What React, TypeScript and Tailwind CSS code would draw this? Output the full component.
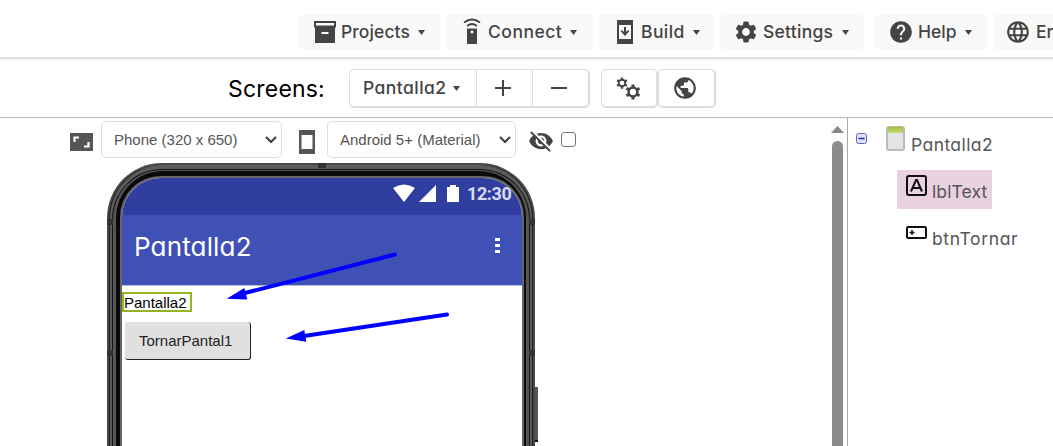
import React from "react";
import { MdSettings, MdHelp, MdLanguage, MdPublic, MdVisibilityOff } from "react-icons/md";

const ui = "font-[Inter,sans-serif] [font-feature-settings:'cv11'] whitespace-nowrap";

function Caret() {
  return (
    <svg width="7" height="5" viewBox="0 0 7 5" fill="#444" className="shrink-0">
      <path d="M0 0h7L3.5 5z" />
    </svg>
  );
}

function ArchiveIcon() {
  return (
    <svg width="22" height="22" viewBox="0 0 22 22" fill="#444">
      <path fillRule="evenodd" d="M0 0h22v6.500H0zM2 2v2.500h18V2z" />
      <path fillRule="evenodd" d="M1 6h20v16H1zM7.500 11v2h7v-2z" />
    </svg>
  );
}

function RemoteIcon() {
  return (
    <svg width="18" height="26" viewBox="0 0 18 26" className="-mt-0.5">
      <path fill="#444" fillRule="evenodd" d="M4 10.500h10V26H4zM9 12.500a1.500 1.500 0 1 0 .01 0z" />
      <path fill="none" stroke="#444" strokeWidth="1.800" d="M1 4.500Q9 -1.500 17 4.500M4 8Q9 4 14 8" />
    </svg>
  );
}

function BuildIcon() {
  return (
    <svg width="16" height="24" viewBox="0 0 16 24" fill="#444">
      <path fillRule="evenodd" d="M0 0h16v24H0zM2 5v14h12V5z" />
      <path d="M7 7h2v5l2-2 1.300 1.300L8 16l-4.300-4.700L5 10l2 2z" />
    </svg>
  );
}

function Gear({ size, className }: { size: number; className: string }) {
  return (
    <svg width={size} height={size} viewBox="0 0 16 16" className={className} fill="none" stroke="#444">
      <circle cx="8" cy="8" r="4.400" strokeWidth="2.500" />
      <path strokeWidth="3" d="M8 .5v3M8 12.500v3M1.500 4.250l2.600 1.500M11.900 10.250l2.600 1.500M1.500 11.750l2.600-1.500M11.900 5.750l2.600-1.500" />
    </svg>
  );
}

function Menu({ icon, label, box, text, caret = true }: { icon: React.ReactNode; label: string; box: string; text: string; caret?: boolean }) {
  return (
    <button className={`flex h-9 shrink-0 items-center rounded-[5px] bg-[#f9f9f9] text-[17.500px] font-medium text-[#444] ${box}`}>
      {icon}
      <span className={`shrink-0 pt-px text-left ${text}`}>{label}</span>
      {caret && <Caret />}
    </button>
  );
}

function Select({ label, box }: { label: string; box: string }) {
  return (
    <div className={`flex h-[37px] shrink-0 items-center justify-between rounded-[5px] border border-[#ddd] bg-white pl-3 pr-[4px] font-['Liberation_Sans',sans-serif] text-[15px] text-[#555] ${box}`}>
      <span className="whitespace-nowrap pt-px">{label}</span>
      <svg width="12" height="8" viewBox="0 0 12 8" fill="none" stroke="#444" strokeWidth="2.200"><path d="M1 1l5 5 5-5" /></svg>
    </div>
  );
}

export default function App() {
  return (
    <div className={`relative flex h-[446px] w-[1053px] flex-col overflow-hidden bg-white ${ui}`}>
      <header className="flex h-[59px] shrink-0 items-start border-b-2 border-[#ddd] pl-[299px] pt-[14px] shadow-[0_1px_3px_#0001]">
        <Menu box="w-[142px] pl-[15px]" icon={<ArchiveIcon />} label="Projects" text="ml-[5px] w-[77px] tracking-[0.1px]" />
        <Menu box="ml-[5px] w-[147px] pl-[17px]" icon={<RemoteIcon />} label="Connect" text="ml-[7px] w-[82px] tracking-[0.5px]" />
        <Menu box="ml-[6px] w-[116px] pl-[18px]" icon={<BuildIcon />} label="Build" text="ml-[8px] w-[52px] tracking-[0.4px]" />
        <Menu box="ml-[5px] w-[144px] pl-[13px]" icon={<MdSettings size={26} />} label="Settings" text="ml-[4px] w-[79px] tracking-[0.25px]" />
        <Menu box="ml-[11px] w-[113px] pl-[13px]" icon={<MdHelp size={26} />} label="Help" text="ml-[4px] w-[47px]" />
        <Menu box="ml-[5px] w-[120px] pl-[12px]" icon={<MdLanguage size={26} />} label="English" text="ml-[5px]" caret={false} />
      </header>

      <section className="flex h-[59px] shrink-0 items-start border-b border-[#bbb] pl-[228px] pt-[10px]">
        <span className="mt-[3px] w-[121px] text-[23px] leading-[34px] tracking-[0.2px] text-black">Screens:</span>
        <div className="flex h-[39px] w-[241px] rounded-[5px] border border-b-2 border-r-2 border-[#ddd]">
          <div className="flex w-[127px] items-center border-r border-[#ddd] pl-[13px] text-[17.500px] font-medium tracking-[0.45px] text-[#444]"><span className="w-[90px] pt-px">Pantalla2</span><Caret /></div>
          <div className="flex w-[56px] items-center justify-center border-r border-[#ddd] pr-[4px]">
            <svg width="16" height="16" stroke="#444" strokeWidth="2"><path d="M0 8h16M8 0v16" /></svg>
          </div>
          <div className="flex w-[54px] items-center justify-center pr-[3px]">
            <svg width="16" height="16" stroke="#444" strokeWidth="2"><path d="M0 8h16" /></svg>
          </div>
        </div>
        <div className="ml-[11px] flex h-[39px] w-[57px] shrink-0 items-start rounded-[5px] border border-b-2 border-r-2 border-[#ddd] pl-[14px] pt-[7px]">
          <Gear size={12} className="shrink-0" />
          <Gear size={16} className="-ml-[3px] mt-[7px] shrink-0" />
        </div>
        <div className="flex h-[39px] w-[58px] items-center rounded-[5px] border border-b-2 border-r-2 border-[#ddd] pl-[13px] text-[#444]"><MdPublic size={26} /></div>
      </section>

      <main className="flex min-h-0 flex-1">
        <section className="flex w-[831px] shrink-0 flex-col">
          <div className="flex h-[45px] shrink-0 items-start pl-[70px] pt-[3px]">
            <svg width="23" height="18" viewBox="0 0 23 18" className="mt-[12px]"><path fill="#555" d="M0 0h23v18H0z" /><path fill="none" stroke="#fff" strokeWidth="2.200" d="M4.500 9V4.500H9M14 13.500h4.500v-4.500" /></svg>
            <Select box="ml-[8px] w-[181px]" label="Phone (320 x 650)" />
            <svg width="16" height="24" viewBox="0 0 16 24" className="ml-[17px] mt-[9px]"><path fill="#555" fillRule="evenodd" d="M0 0h16v24H0zM2.500 5v14h11V5z" /></svg>
            <Select box="ml-[12px] w-[189px]" label="Android 5+ (Material)" />
            <MdVisibilityOff size={26} className="ml-[12px] mt-[7px] text-[#444]" />
            <span className="ml-[7px] mt-[11px] h-[15px] w-[15px] rounded-[3px] border border-[#777]" />
          </div>
          <div className="relative ml-[107px] flex h-[500px] w-[428px] shrink-0 rounded-t-[55px] bg-[#4a4a4a] px-[2px] pt-[2px]">
            <span className="absolute left-[428px] top-[224px] h-[55px] w-[3px] border-b-2 border-[#111] bg-[#555]" />
            <span className="absolute left-0 top-[56px] h-[6px] w-[6px] bg-[#333]" />
            <span className="absolute left-0 top-[187px] h-[6px] w-[6px] bg-[#333]" />
            <span className="absolute right-0 top-[56px] h-[6px] w-[6px] bg-[#333]" />
            <span className="absolute right-0 top-[187px] h-[6px] w-[6px] bg-[#333]" />
            <span className="absolute left-[211px] top-0 h-[5px] w-[8px] bg-[#333]" />
            <div className="flex w-full rounded-t-[53px] bg-[#1c1c1c] px-px">
              <div className="flex w-full rounded-t-[53px] bg-[#5c5c5c] px-[2px] pt-[4px]">
                <div className="flex w-full rounded-t-[50px] bg-[#141414] px-px pt-px">
                  <div className="flex w-full rounded-t-[49px] bg-[#555] px-[3px] pt-px">
                    <div className="flex w-full rounded-t-[47px] bg-[#0a0a0a] pl-[4px] pr-[2px] pt-[5px]">
                      <div className="flex w-full rounded-t-[41px] bg-[#666] px-[2px] pt-[2px]">
                        <div className="flex w-full flex-col overflow-hidden rounded-t-[39px] bg-white">
                          <div className="flex h-[37px] shrink-0 items-center bg-[#303f9f] pl-[271px] text-white">
                            <svg width="66" height="19" viewBox="0 0 66 19" fill="#fff" className="-mt-[6px] shrink-0">
                              <path d="M0 4Q11 -3 22 4L11 18zM43 1v17H26zM54 3v15h12V3h-3V1h-6v2z" />
                            </svg>
                            <span className="-mt-[6px] ml-[8px] font-[Roboto,sans-serif] text-[18px] font-bold tracking-[-0.4px] text-[#d9dcf2]">12:30</span>
                          </div>
                          <div className="flex h-[71px] shrink-0 items-center justify-between border-b border-[#b5bce4] bg-[#3f51b5] pl-3 pr-[22px] text-[26px] tracking-[0.15px] text-white">
                            <span className="-mt-2">Pantalla2</span>
                            <svg width="5" height="16" fill="#fff" className="-mt-2"><path d="M0 0h5v3H0zM0 6h5v3H0zM0 12h5v3H0z" /></svg>
                          </div>
                          <div className="mt-[6px] flex h-5 w-[70px] shrink-0 items-center border-2 border-[#93b51e] pt-px font-['Liberation_Sans',sans-serif] text-[15px] leading-none text-black">Pantalla2</div>
                          <div className="ml-[3px] mt-[10px] flex h-[38px] w-[126px] shrink-0 items-center rounded-[3px] border-b-[1.500px] border-r-[1.500px] border-[#222] bg-[#e0e0e0] pl-[14px] pt-px font-['Liberation_Sans',sans-serif] text-[15px] text-[#222]">TornarPantal1</div>
                        </div>
                      </div>
                    </div>
                  </div>
                </div>
              </div>
            </div>
          </div>
        </section>
        <div className="flex w-[17px] shrink-0 flex-col items-center border-r border-[#aaa] bg-[#fcfcfc] pr-[3px] pt-[8px]">
          <svg width="13" height="7" fill="#888"><path d="M0 7L6.500 0 13 7z" /></svg>
          <div className="mt-[8px] w-[11px] flex-1 rounded-t-full bg-[#8b8b8b]" />
        </div>
        <aside className="flex flex-1 flex-col text-[17.500px] text-[#555]">
          <div className="flex h-[52px] items-start pl-[8px] pt-[8px]">
            <svg width="11" height="11" className="mt-[7px]"><rect x=".5" y=".5" width="10" height="10" rx="2" fill="#dde0fa" stroke="#6068b8" /><path d="M2.500 5.500h6" stroke="#2030a0" strokeWidth="1.500" /></svg>
            <svg width="19" height="25" className="ml-[19px]">
              <defs><linearGradient id="g" x1="0" y1="0" x2="0" y2="1"><stop offset="0" stopColor="#9fc231" /><stop offset="1" stopColor="#c5da80" /></linearGradient></defs>
              <rect x="1" y="1" width="17" height="23" rx="2" fill="#e3e3e3" stroke="#bbb" strokeWidth="2" /><path d="M2 1h15v6H2z" fill="url(#g)" />
            </svg>
            <span className="ml-[6px] mt-[6px] tracking-[0.42px]">Pantalla2</span>
          </div>
          <div className="ml-[49px] flex h-[39px] w-[95px] items-start bg-[#ead1e0] pl-[9px] pt-[5px]">
            <svg width="21" height="21" fill="none" stroke="#111" strokeWidth="2"><rect x="1" y="1" width="19" height="19" rx="2" /><path d="M5 16.500L10 5h1l5 11.500M7 13h7" /></svg>
            <span className="ml-[5px] mt-[4px] tracking-[0.1px]">lblText</span>
          </div>
          <div className="ml-[58px] mt-[17px] flex items-start">
            <svg width="21" height="13" fill="none" stroke="#111" strokeWidth="2"><rect x="1" y="1" width="19" height="11" rx="1" /><path d="M3.500 6.500h5M6 4v5" strokeWidth="1.500" /></svg>
            <span className="ml-[5px] tracking-[0.65px]">btnTornar</span>
          </div>
        </aside>
      </main>

      <svg width="1053" height="446" className="pointer-events-none absolute inset-0" fill="#00f" stroke="#00f">
        <path d="M395 254.500L245 293M447 314.500L304 336" strokeWidth="4" strokeLinecap="round" />
        <path stroke="none" d="M226.700 298.700L244.300 288l3 11.500zM285.700 338.500L304.300 330l2 11.700z" />
      </svg>
    </div>
  );
}
